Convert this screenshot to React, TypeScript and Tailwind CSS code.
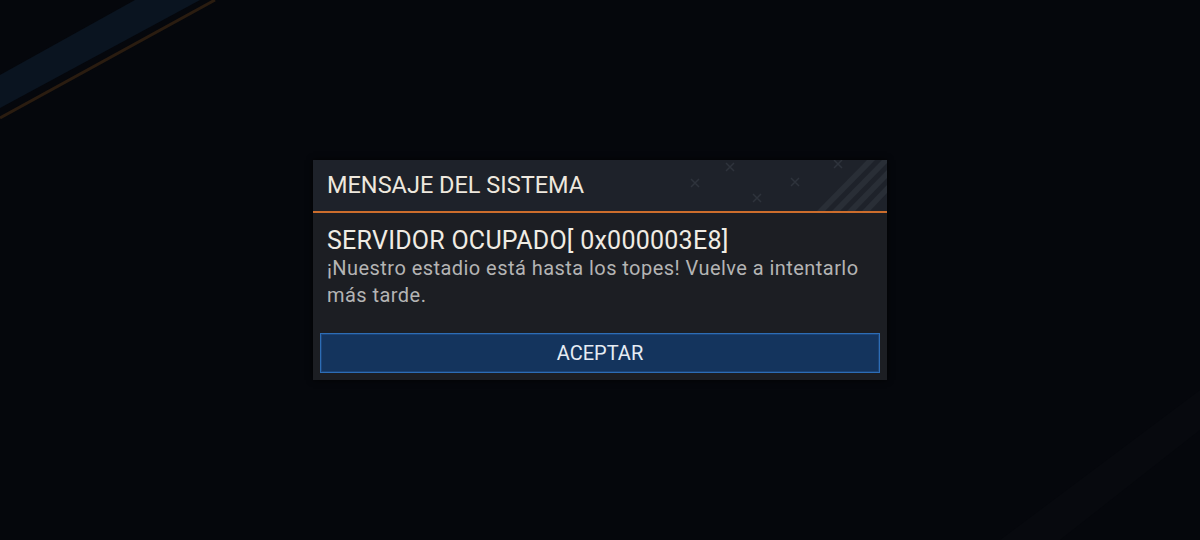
export default function App() {
  return (
    <div
      className="relative flex h-[540px] w-[1200px] items-center justify-center overflow-hidden bg-[#05070c]"
      style={{ fontFamily: "Roboto, 'Noto Sans', sans-serif" }}
    >
      {/* faint stadium streaks in the background */}
      <svg className="absolute inset-0 h-full w-full" viewBox="0 0 1200 540">
        <polygon points="0,75 135,0 200,0 0,108" fill="#0a1420" />
        <line x1="0" y1="118" x2="215" y2="0" stroke="#2a1c10" strokeWidth="3" />
        <polygon points="1000,540 1200,390 1200,430 1060,540" fill="#07090e" />
      </svg>

      <div className="relative flex w-[574px] flex-col bg-[#1c1e23] shadow-[0_0_6px_rgba(0,0,0,0.8)]">
        <div className="relative flex h-[51px] items-center overflow-hidden bg-[#1e222a] pl-[14px]">
          <svg
            className="absolute right-0 top-0 h-[51px] w-[200px]"
            viewBox="0 0 200 51"
          >
            <g stroke="#2e333c" strokeWidth="1.5">
              <path d="M4 19 l8 8 M12 19 l-8 8" />
              <path d="M39 3 l8 8 M47 3 l-8 8" />
              <path d="M66 34 l8 8 M74 34 l-8 8" />
              <path d="M104 18 l8 8 M112 18 l-8 8" />
              <path d="M147 0 l8 8 M155 0 l-8 8" />
            </g>
            <g fill="#292e36">
              <polygon points="130,51 180,0 188,0 138,51" />
              <polygon points="145,51 195,0 200,0 200,3 153,51" />
              <polygon points="160,51 200,10 200,18 168,51" />
              <polygon points="175,51 200,25 200,33 183,51" />
            </g>
          </svg>
          <span className="relative text-[23.5px] leading-none text-[#eee8de]">
            MENSAJE DEL SISTEMA
          </span>
        </div>
        <div className="h-[2px] bg-[#cc6d2c]" />

        <div className="flex flex-col px-[14px] pt-[14px]">
          <div className="text-[25px] leading-[28px] tracking-[0.25px] text-[#f0ece4]">
            SERVIDOR OCUPADO[ 0x000003E8]
          </div>
          <p className="text-[20px] leading-[27px] tracking-[0.45px] text-[#b4b4b4]">
            ¡Nuestro estadio está hasta los topes! Vuelve a intentarlo más tarde.
          </p>
        </div>

        <div className="px-[7px] pb-[7px] pt-[24px]">
          <button className="flex h-[40px] w-full items-center justify-center border border-[#2d6db5] bg-[#14345d] text-[20px] text-[#e6ecf4] shadow-[inset_0_0_0_1px_#1b4479]">
            ACEPTAR
          </button>
        </div>
      </div>
    </div>
  );
}
